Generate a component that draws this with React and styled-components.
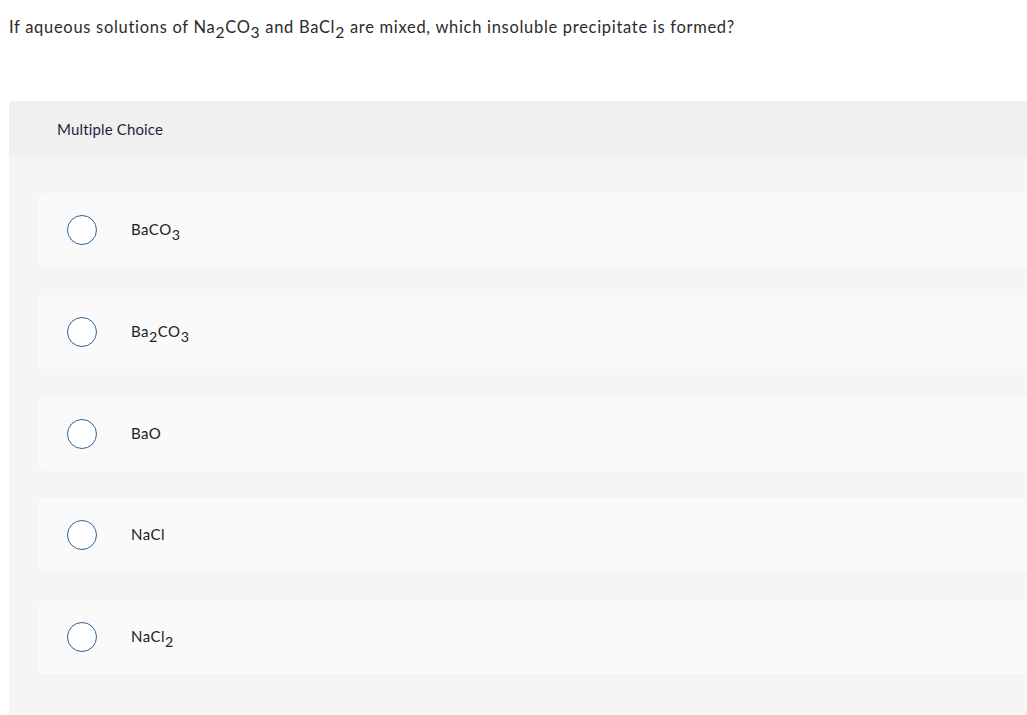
import React from "react";
import styled, { createGlobalStyle } from "styled-components";

const Global = createGlobalStyle`
  html, body { margin: 0; padding: 0; background: #ffffff; }
  body { font-family: Lato, "Open Sans", "Liberation Sans", sans-serif; color: #2d2d2d; overflow: hidden; }
`;

const Page = styled.div`
  padding: 16px 0 0 9px;
`;

const Question = styled.p`
  margin: 0;
  font-size: 16.5px;
  letter-spacing: 0.7px;
  line-height: 22px;
  color: #2b2b2b;
`;

const Sub = styled.sub`
  font-size: 0.95em;
  vertical-align: -0.32em;
  line-height: 0;
`;

const Card = styled.section`
  margin-top: 63px;
  border-radius: 4px 0 0 0;
  overflow: hidden;
  background: #f5f5f5;
  padding-bottom: 60px;
`;

const CardHeader = styled.header`
  height: 56px;
  display: flex;
  align-items: center;
  padding-left: 48px;
  background: #f0f0f0;
  font-size: 15px;
  letter-spacing: 0.15px;
  color: #1f1f3a;
`;

const Options = styled.div`
  display: flex;
  flex-direction: column;
  gap: 27.75px;
  padding: 36px 0 0 30px;
`;

const Option = styled.label`
  height: 74px;
  display: flex;
  align-items: center;
  background: #fafafa;
  border-radius: 3px 0 0 3px;
  padding-left: 28px;
  cursor: pointer;
`;

const Radio = styled.span`
  width: 28px;
  height: 28px;
  border-radius: 50%;
  border: 1.6px solid #2f6196;
  background: #ffffff;
  flex: none;
`;

const OptionText = styled.span`
  margin-left: 34px;
  font-size: 15px;
  letter-spacing: 0.5px;
  color: #222222;
  padding-bottom: 2px;
`;

const choices = [
  <>BaCO<Sub>3</Sub></>,
  <>Ba<Sub>2</Sub>CO<Sub>3</Sub></>,
  <>BaO</>,
  <>NaCl</>,
  <>NaCl<Sub>2</Sub></>,
];

export default function App() {
  return (
    <>
      <Global />
      <Page>
        <Question>
          If aqueous solutions of Na<Sub>2</Sub>CO<Sub>3</Sub> and BaCl<Sub>2</Sub> are mixed, which insoluble precipitate is formed?
        </Question>
        <Card>
          <CardHeader>Multiple Choice</CardHeader>
          <Options>
            {choices.map((c, i) => (
              <Option key={i}>
                <Radio />
                <OptionText>{c}</OptionText>
              </Option>
            ))}
          </Options>
        </Card>
      </Page>
    </>
  );
}
